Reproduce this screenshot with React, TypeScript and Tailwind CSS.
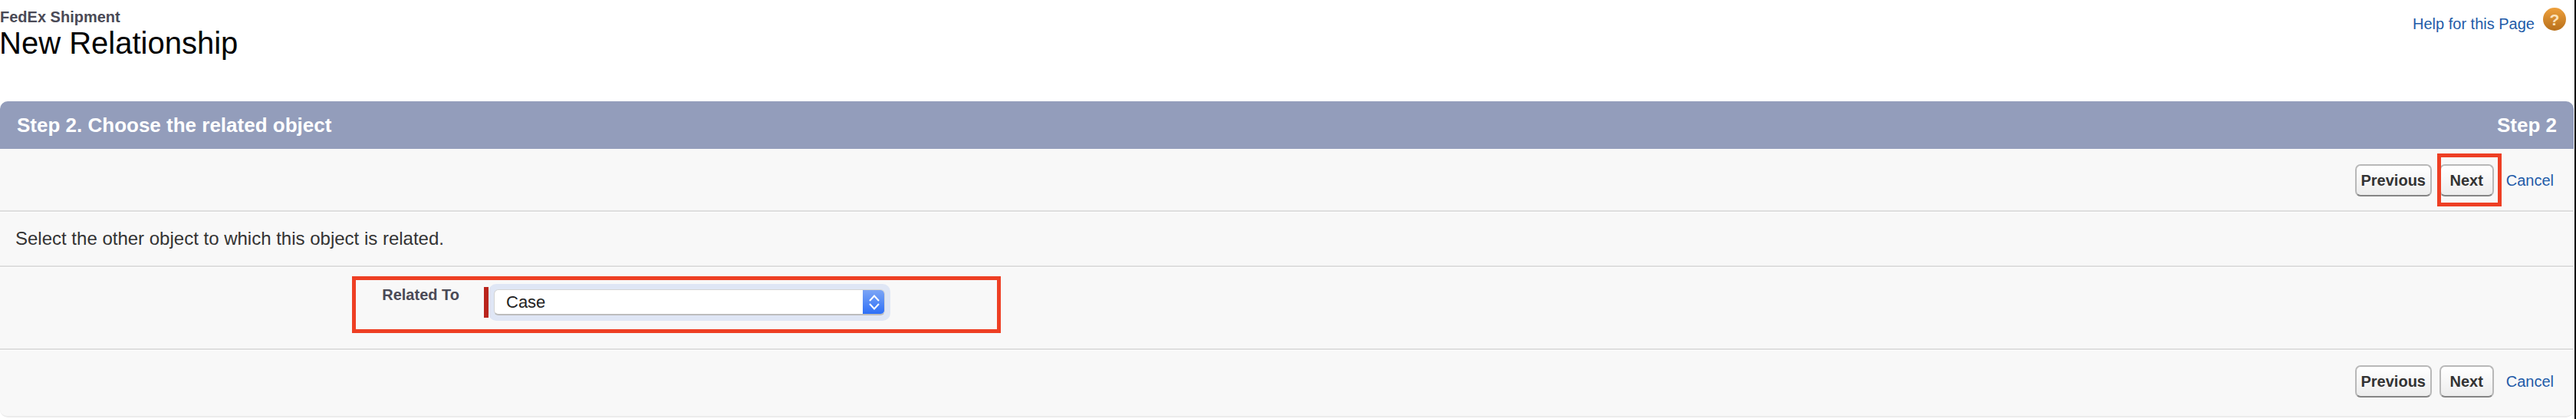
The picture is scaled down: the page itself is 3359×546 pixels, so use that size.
const sans = '[font-family:"Liberation_Sans",Arial,sans-serif]';

const PageButton = ({ label, width }: { label: string; width: string }) => (
  <button
    type="button"
    className={`${width} h-[42px] rounded-[7px] border-2 border-[#b8b8b8] border-b-[#858585] bg-gradient-to-b from-white to-[#ededed] text-[20px] font-bold text-[#333333]`}
  >
    {label}
  </button>
);

const ButtonRow = () => (
  <div className="flex items-center justify-end">
    <PageButton label="Previous" width="w-[100px]" />
    <div className="ml-[10px]">
      <PageButton label="Next" width="w-[71px]" />
    </div>
    <a className="ml-[16px] mr-[26px] text-[20px] text-[#1f5ba8]">Cancel</a>
  </div>
);

const App = () => {
  return (
    <div className={`${sans} relative h-[546px] w-[3359px] overflow-hidden border-r-2 border-black bg-white`}>
      <div className="flex h-[132px] justify-between">
        <div>
          <div className="pt-[10px] text-[20px] font-bold leading-[24px] text-[#4a4a56]">FedEx Shipment</div>
          <h1 className="-ml-[1px] text-[40px] font-normal leading-[44px] text-black">New Relationship</h1>
        </div>
        <div className="mr-[11px] flex items-start pt-[10px]">
          <a className="mt-[8px] text-[20px] leading-[26px] text-[#1f5ba8]">Help for this Page</a>
          <div className="ml-[11px] flex h-[30px] w-[30px] items-center justify-center rounded-full bg-gradient-to-b from-[#eea03c] to-[#b8701a] text-[21px] font-bold leading-none text-[#fbe3bd]">
            ?
          </div>
        </div>
      </div>

      <div className="mr-[1px] rounded-[10px] border-b-2 border-[#ececec] bg-[#f8f8f8]">
        <div className="flex h-[62px] items-center justify-between rounded-t-[10px] bg-[#939dbb] pl-[22px] pr-[22px] text-[26px] font-bold text-white">
          <span>Step 2. Choose the related object</span>
          <span>Step 2</span>
        </div>

        <div className="h-[82px] border-b-2 border-[#dedede] pt-[20px] shadow-[0_1px_0_#ffffff]">
          <ButtonRow />
        </div>

        <div className="flex h-[72px] items-center border-b-2 border-[#dedede] pl-[20px] text-[24px] text-[#333333] shadow-[0_1px_0_#ffffff]">
          Select the other object to which this object is related.
        </div>

        <div className="flex h-[108px] border-b-2 border-[#dedede] shadow-[0_1px_0_#ffffff]">
          <div className="w-[599px] pt-[24px] text-right text-[20px] font-bold leading-[24px] text-[#4a4a56]">Related To</div>
          <div className="ml-[32px] mt-[26px] h-[40px] w-[6px] bg-[#b9241c]" />
          <div className="mt-[22px] h-[48px] w-[524px] rounded-[10px] bg-[#dfe6f5] p-[7px]">
            <div className="flex h-[34px] overflow-hidden rounded-[6px] border border-b-2 border-[#d4d4d4] border-b-[#bdbdbd] bg-white">
              <div className="flex flex-1 items-center pl-[15px] text-[22px] text-[#222222]">Case</div>
              <div className="-my-[1px] -mr-[1px] flex w-[29px] items-center justify-center bg-gradient-to-b from-[#7ea6f5] to-[#2a6cf6]">
                <svg width="14" height="20" viewBox="0 0 14 20" fill="none" stroke="white" strokeWidth="2">
                  <path d="M1 8 L7 1.5 L13 8" />
                  <path d="M1 12 L7 18.5 L13 12" />
                </svg>
              </div>
            </div>
          </div>
        </div>

        <div className="h-[86px] pt-[20px]">
          <ButtonRow />
        </div>
      </div>

      {/* annotation boxes drawn on top of the screenshot */}
      <div className="absolute left-[3178px] top-[200px] h-[69px] w-[84px] border-[5px] border-[#ee3f24]" />
      <div className="absolute left-[459px] top-[360px] h-[74px] w-[846px] border-[5px] border-[#ee3f24]" />
    </div>
  );
};

export default App;
